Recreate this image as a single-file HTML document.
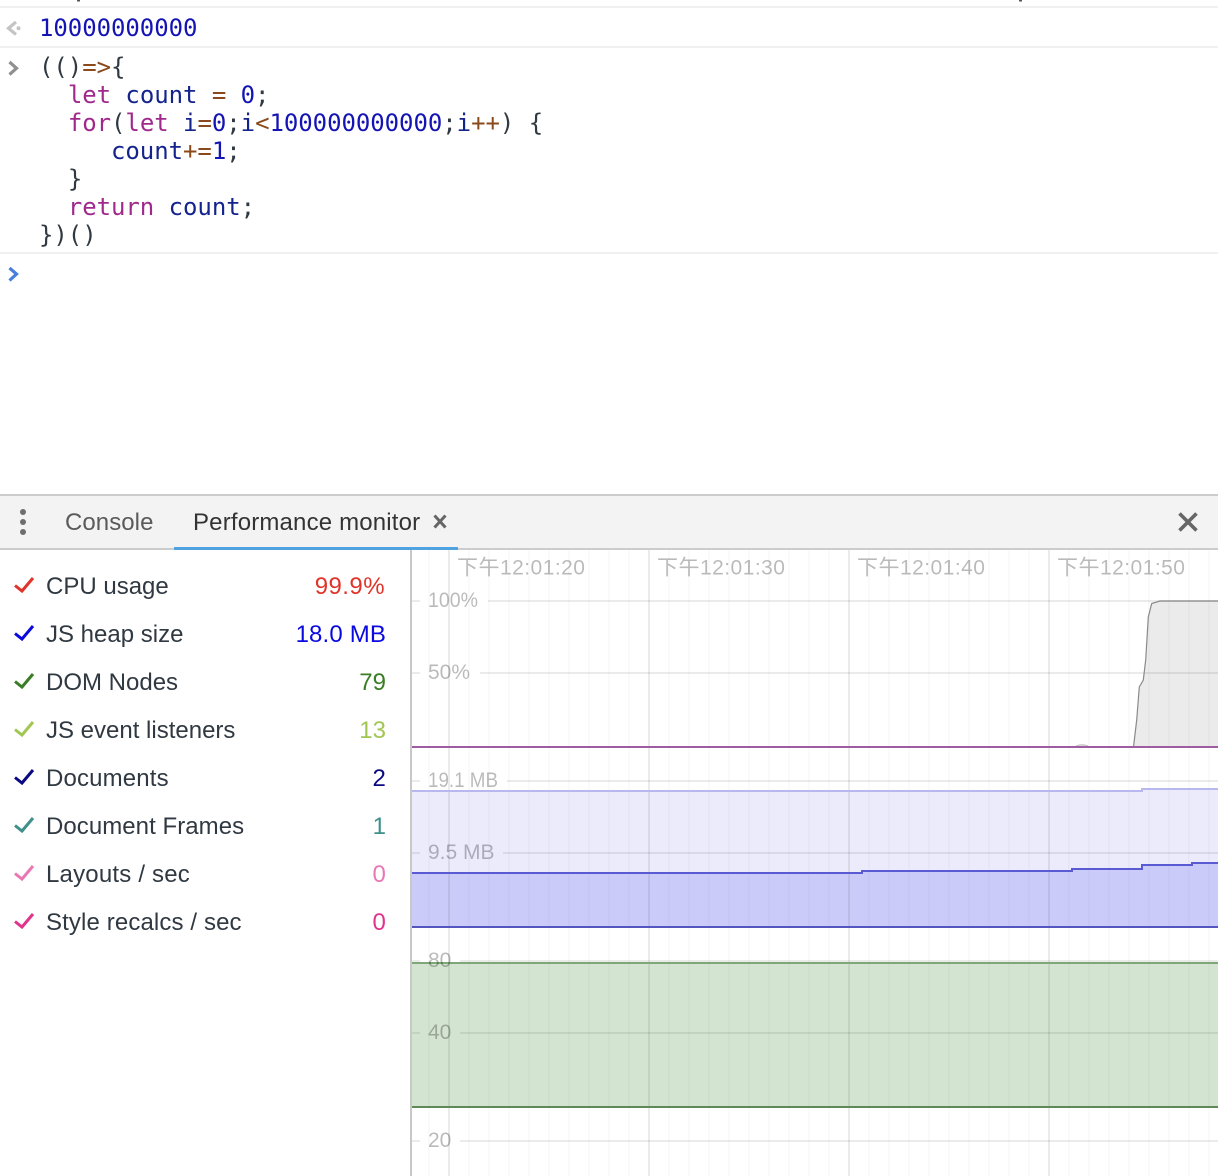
<!DOCTYPE html>
<html><head><meta charset="utf-8">
<style>
html,body{margin:0;padding:0;background:#fff;}
body{width:1218px;height:1176px;position:relative;overflow:hidden;font-family:"Liberation Sans","Noto Sans CJK SC",sans-serif;}
.code{position:absolute;left:39px;font:24px/28px "DejaVu Sans Mono","Liberation Mono",monospace;letter-spacing:-.05px;white-space:pre;color:#303942;}
.k{color:#a02a8c}.v{color:#1414b4}.n{color:#14248c}.o{color:#8a4a1c}.p{color:#303942}
.sep{position:absolute;left:0;width:1218px;height:2px;background:#f0f0f0;}
.tabbar{position:absolute;left:0;top:494px;width:1218px;background:#f3f3f3;border-top:2px solid #ccc;border-bottom:2px solid #ccc;box-sizing:content-box;height:52px;}
.tab{position:absolute;top:508px;font-size:24px;line-height:30px;white-space:nowrap;}
.row{position:absolute;left:46px;width:340px;height:30px;font-size:24px;line-height:30px;color:#303942;white-space:nowrap;}
.row b{position:absolute;right:0;top:0;font-weight:normal;}
svg{position:absolute;left:0;top:0;}
</style></head><body>
<div class="sep" style="top:6px"></div>
<div class="sep" style="top:46px"></div>
<div class="sep" style="top:252px"></div>

<div class="code" style="top:14px;color:#1414b4">10000000000</div>
<div class="code" style="top:53px"><span class="p">(()</span><span class="o">=&gt;</span><span class="p">{</span>
  <span class="k">let</span> <span class="n">count</span> <span class="o">=</span> <span class="v">0</span><span class="p">;</span>
  <span class="k">for</span><span class="p">(</span><span class="k">let</span> <span class="n">i</span><span class="o">=</span><span class="v">0</span><span class="p">;</span><span class="n">i</span><span class="o">&lt;</span><span class="v">100000000000</span><span class="p">;</span><span class="n">i</span><span class="o">++</span><span class="p">) {</span>
     <span class="n">count</span><span class="o">+=</span><span class="v">1</span><span class="p">;</span>
  <span class="p">}</span>
  <span class="k">return</span> <span class="n">count</span><span class="p">;</span>
<span class="p">})()</span></div>

<div class="tabbar"></div>
<div class="tab" style="left:65px;color:#5a5a5a;letter-spacing:.06px">Console</div>
<div class="tab" style="left:193px;color:#333;letter-spacing:.17px">Performance monitor</div>

<div class="row" style="top:572px">CPU usage<b style="color:#e0342a;letter-spacing:.45px;right:1px">99.9%</b></div>
<div class="row" style="top:620px">JS heap size<b style="color:#0a0ae0;letter-spacing:.15px">18.0 MB</b></div>
<div class="row" style="top:668px">DOM Nodes<b style="color:#3a7d24">79</b></div>
<div class="row" style="top:716px">JS event listeners<b style="color:#a2c653">13</b></div>
<div class="row" style="top:764px;letter-spacing:.15px">Documents<b style="color:#0a0a80">2</b></div>
<div class="row" style="top:812px;letter-spacing:.05px">Document Frames<b style="color:#3f8f8a">1</b></div>
<div class="row" style="top:860px;letter-spacing:.2px">Layouts / sec<b style="color:#e878b4">0</b></div>
<div class="row" style="top:908px;letter-spacing:.12px">Style recalcs / sec<b style="color:#e0348c">0</b></div>

<svg width="1218" height="1176" viewBox="0 0 1218 1176" font-family="'Liberation Sans','Noto Sans CJK SC',sans-serif">
  <!-- console gutter icons -->
  <rect x="77" y="0" width="3" height="1.500" fill="#555"/>
  <rect x="1019" y="0" width="3" height="1.500" fill="#555"/>
  <path d="M16 22 L8.500 28.300 L16 34.500" fill="none" stroke="#c4c4c4" stroke-width="3.200"/>
  <circle cx="18.500" cy="28.300" r="2" fill="#c4c4c4"/>
  <path d="M9.500 62 L16.500 68.300 L9.500 74.500" fill="none" stroke="#909090" stroke-width="3.200"/>
  <path d="M9.500 268 L16.500 274 L9.500 280.500" fill="none" stroke="#4a80dc" stroke-width="3.200"/>

  <!-- tab icons -->
  <circle cx="23" cy="512" r="3" fill="#6e6e6e"/><circle cx="23" cy="522" r="3" fill="#6e6e6e"/><circle cx="23" cy="532" r="3" fill="#6e6e6e"/>
  <path d="M434.500 515.500 L445.500 527.500 M445.500 515.500 L434.500 527.500" stroke="#666" stroke-width="3" fill="none"/>
  <path d="M1179.500 513.500 L1196.500 530.500 M1196.500 513.500 L1179.500 530.500" stroke="#666" stroke-width="3.600" fill="none"/>
  <rect x="174" y="547" width="284" height="3" fill="#4fa3e0"/>

  <!-- checks -->
  <g fill="none" stroke-width="3">
    <path d="M15 585.500 L22 591 L33 578" stroke="#e0342a"/>
    <path d="M15 633.500 L22 639 L33 626" stroke="#0a0ae0"/>
    <path d="M15 681.500 L22 687 L33 674" stroke="#3a7d24"/>
    <path d="M15 729.500 L22 735 L33 722" stroke="#a2c653"/>
    <path d="M15 777.500 L22 783 L33 770" stroke="#0a0a80"/>
    <path d="M15 825.500 L22 831 L33 818" stroke="#3f8f8a"/>
    <path d="M15 873.500 L22 879 L33 866" stroke="#e878b4"/>
    <path d="M15 921.500 L22 927 L33 914" stroke="#e0348c"/>
  </g>

  <!-- chart fills -->
  <path d="M1133.500 747 L1136.700 720 L1139.300 687 L1143.300 680 L1145.700 660 L1148.300 617 L1151.700 603.500 L1160 601 L1218 601 L1218 747 Z" fill="#ebebeb" stroke="none"/>
  <path d="M1076 746 Q1082 743.500 1088 746" fill="#e8e8e8" stroke="#bbb" stroke-width="1"/>
  <path d="M412 791 L1142 791 L1142 789 L1218 789 L1218 927 L412 927 Z" fill="#ebebfc"/>
  <path d="M412 873 L862 873 L862 871 L1072 871 L1072 869 L1142 869 L1142 865 L1192 865 L1192 863 L1218 863 L1218 927 L412 927 Z" fill="#cbcbfa"/>
  <rect x="412" y="963" width="806" height="144" fill="#d3e5d1"/>

  <!-- minor grid -->
  <g stroke="#000" stroke-opacity=".018" stroke-width="2">
    <path d="M429 550V1176M469 550V1176M489 550V1176M509 550V1176M529 550V1176M549 550V1176M569 550V1176M589 550V1176M609 550V1176M629 550V1176M669 550V1176M689 550V1176M709 550V1176M729 550V1176M749 550V1176M769 550V1176M789 550V1176M809 550V1176M829 550V1176M869 550V1176M889 550V1176M909 550V1176M929 550V1176M949 550V1176M969 550V1176M989 550V1176M1009 550V1176M1029 550V1176M1069 550V1176M1089 550V1176M1109 550V1176M1129 550V1176M1149 550V1176M1169 550V1176M1189 550V1176M1209 550V1176"/>
  </g>
  <!-- major grid -->
  <g stroke="#000" stroke-opacity=".08" stroke-width="2">
    <path d="M449 550V1176M649 550V1176M849 550V1176M1049 550V1176"/>
    <path d="M412 601H420M488 601H1218"/>
    <path d="M412 673H420M480 673H1218"/>
    <path d="M412 781H420M507 781H1218"/>
    <path d="M412 853H420M503 853H1218"/>
    <path d="M412 961H420M460 961H1218"/>
    <path d="M412 1033H420M460 1033H1218"/>
    <path d="M412 1141H420M460 1141H1218"/>
  </g>

  <!-- chart lines -->
  <path d="M1133.500 747 L1136.700 720 L1139.300 687 L1143.300 680 L1145.700 660 L1148.300 617 L1151.700 603.500 L1160 601 L1218 601" fill="none" stroke="#8a8a8a" stroke-width="1.200"/>
  <rect x="412" y="746" width="806" height="2" fill="#a05ca0"/>
  <path d="M412 791 L1142 791 L1142 789 L1218 789" fill="none" stroke="#b8b8ee" stroke-width="2"/>
  <path d="M412 873 L862 873 L862 871 L1072 871 L1072 869 L1142 869 L1142 865 L1192 865 L1192 863 L1218 863" fill="none" stroke="#5a5ad2" stroke-width="2"/>
  <rect x="412" y="926" width="806" height="2" fill="#5555c0"/>
  <rect x="412" y="962" width="806" height="2" fill="#7fa878"/>
  <rect x="412" y="1106" width="806" height="2" fill="#5f8a58"/>

  <!-- labels -->
  <g fill="#000" fill-opacity=".27" font-size="21">
    <text x="457" y="574.500" letter-spacing=".47">下午12:01:20</text>
    <text x="657" y="574.500" letter-spacing=".47">下午12:01:30</text>
    <text x="857" y="574.500" letter-spacing=".47">下午12:01:40</text>
    <text x="1057" y="574.500" letter-spacing=".47">下午12:01:50</text>
    <text x="428" y="607" textLength="50" lengthAdjust="spacingAndGlyphs">100%</text>
    <text x="428" y="679">50%</text>
    <text x="428" y="787" textLength="70" lengthAdjust="spacingAndGlyphs">19.1 MB</text>
    <text x="428" y="859">9.5 MB</text>
    <text x="428" y="967">80</text>
    <text x="428" y="1039">40</text>
    <text x="428" y="1147">20</text>
  </g>
  <rect x="410" y="550" width="2" height="626" fill="#c8c8c8"/>
</svg>
</body></html>
